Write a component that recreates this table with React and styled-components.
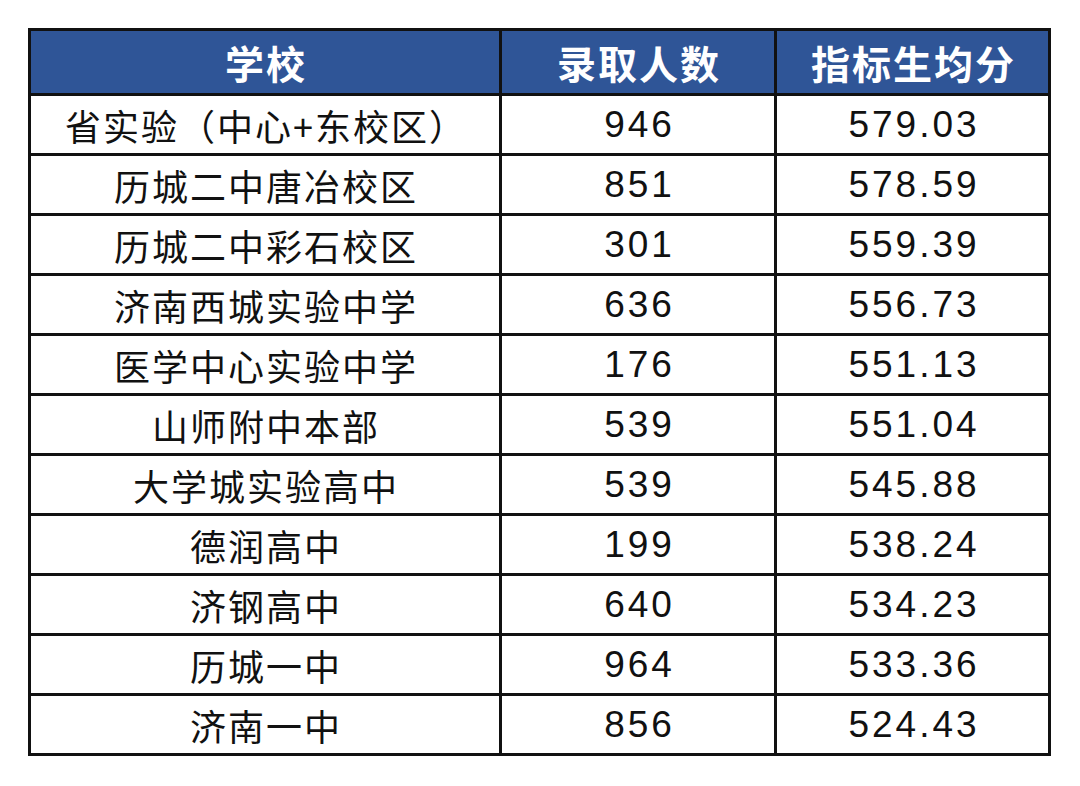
import React from 'react'
import styled, { createGlobalStyle } from 'styled-components'

const GlobalStyle = createGlobalStyle`
  html, body {
    margin: 0;
    padding: 0;
    background: #ffffff;
  }
`

const rows = [
  ['省实验（中心+东校区）', '946', '579.03'],
  ['历城二中唐冶校区', '851', '578.59'],
  ['历城二中彩石校区', '301', '559.39'],
  ['济南西城实验中学', '636', '556.73'],
  ['医学中心实验中学', '176', '551.13'],
  ['山师附中本部', '539', '551.04'],
  ['大学城实验高中', '539', '545.88'],
  ['德润高中', '199', '538.24'],
  ['济钢高中', '640', '534.23'],
  ['历城一中', '964', '533.36'],
  ['济南一中', '856', '524.43'],
]

export default function App() {
  return (
    <Page>
      <GlobalStyle />
      <Table>
        <HeadCell>学校</HeadCell>
        <HeadCell>录取人数</HeadCell>
        <HeadCell>指标生均分</HeadCell>
        {rows.map((r, i) => (
          <React.Fragment key={i}>
            <Cell>{r[0]}</Cell>
            <Cell $num>{r[1]}</Cell>
            <Cell $num>{r[2]}</Cell>
          </React.Fragment>
        ))}
      </Table>
    </Page>
  )
}

const Page = styled.div`
  width: 1080px;
  height: 786px;
  padding: 28px 0 0 28px;
  box-sizing: border-box;
  background: #ffffff;
`

const Table = styled.div`
  width: 1023px;
  box-sizing: border-box;
  display: grid;
  grid-template-columns: 468px 272px 271px;
  grid-template-rows: 62px repeat(11, 57px);
  gap: 3px;
  padding: 3px;
  background: #111111;
`

const HeadCell = styled.div`
  background: #2f5597;
  color: #ffffff;
  display: flex;
  align-items: center;
  justify-content: center;
  font-family: "Noto Sans CJK SC", "Noto Sans", sans-serif;
  font-weight: 700;
  font-size: 39px;
  letter-spacing: 2px;
  padding-left: 2px;
`

const Cell = styled.div`
  background: #ffffff;
  color: #111111;
  display: flex;
  align-items: center;
  justify-content: center;
  font-family: ${p => (p.$num ? '"Liberation Sans", Arial' : '"Noto Sans CJK SC"')}, "Noto Sans CJK SC", sans-serif;
  font-size: ${p => (p.$num ? '37px' : '36px')};
  letter-spacing: ${p => (p.$num ? '3px' : '2px')};
  padding-left: ${p => (p.$num ? '3px' : '2px')};
  white-space: nowrap;
`
